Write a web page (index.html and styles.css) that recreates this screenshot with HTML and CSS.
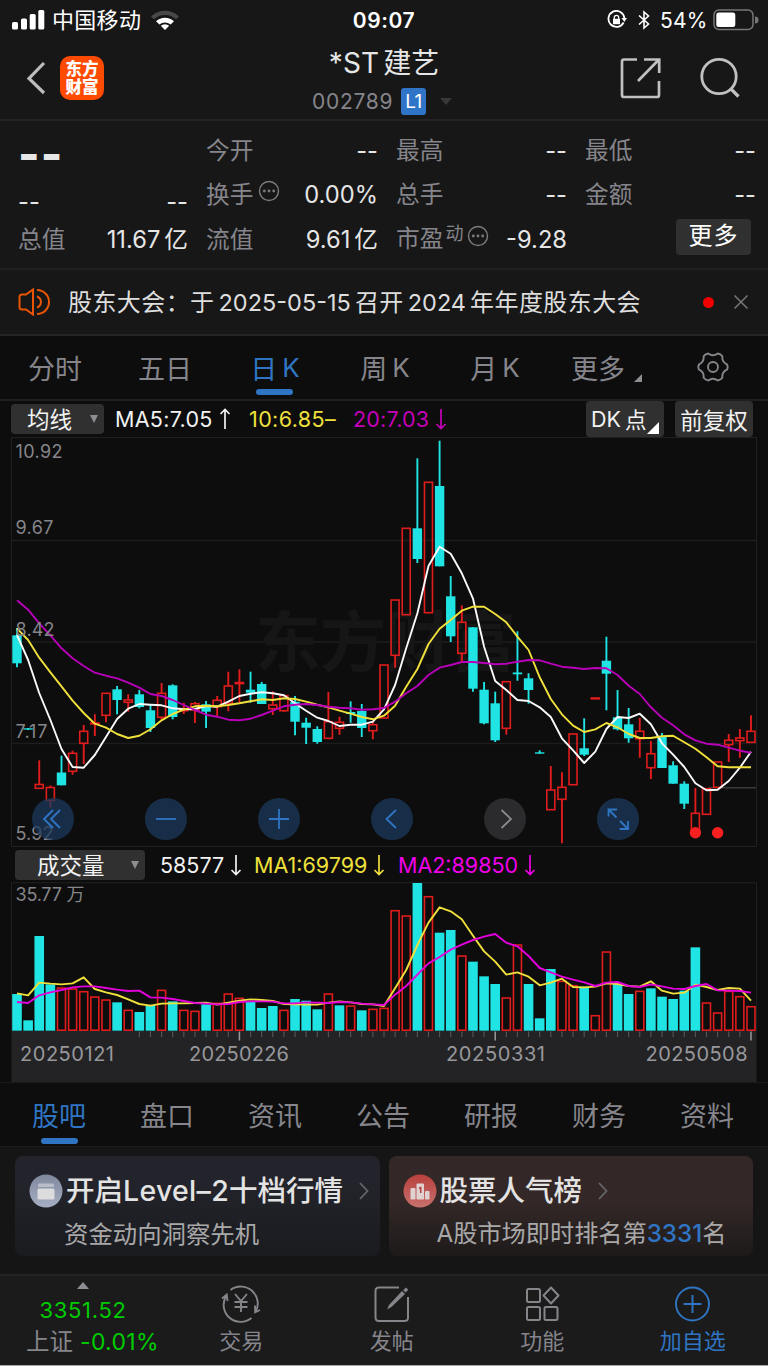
FILE: index.html
```html
<!DOCTYPE html>
<html lang="zh-CN">
<head>
<meta charset="utf-8">
<title>*ST建艺 002789</title>
<link rel="stylesheet" href="styles.css">
</head>
<body>
<div class="status">
  <div class="carrier">
    <svg width="34" height="22" viewBox="0 0 34 22" fill="#fff"><rect x="0" y="13" width="6" height="7.500" rx="1.500"/><rect x="9" y="9.500" width="6" height="11" rx="1.500"/><rect x="17.700" y="5" width="6" height="15.500" rx="1.500"/><rect x="26.300" y="1" width="6" height="19.500" rx="1.500"/></svg>
    <span class="carrier-name">中国移动</span>
    <svg width="30" height="22" viewBox="0 0 30 22"><path d="M0 7.500A20 20 0 0 1 28 7.500L25 10.300A16 16 0 0 0 3 10.300Z" fill="#484848"/><path d="M5 12.300A13 13 0 0 1 23 12.300L19.600 15.600A8.400 8.400 0 0 0 8.400 15.600Z" fill="#fff"/><path d="M14 21L9.800 16.800A6.200 6.200 0 0 1 18.200 16.800Z" fill="#fff"/></svg>
  </div>
  <div class="clock">09:07</div>
  <div class="power">
    <svg width="20" height="20" viewBox="0 0 20 20" fill="none" stroke="#fff" stroke-width="1.800"><path d="M16.600 12.500A8 8 0 1 1 17.400 8"/><path d="M14.500 8H20L17.300 12Z" fill="#fff" stroke="none"/><rect x="6" y="8.800" width="7" height="5.400" fill="#fff" stroke="none"/><path d="M7.300 9V7.500a2.200 2.200 0 0 1 4.400 0V9" stroke-width="1.300"/></svg>
    <svg class="bt" width="12" height="20" viewBox="0 0 12 20" fill="none" stroke="#fff" stroke-width="1.600"><path d="M1 5.500L10.500 14L6 18V2L10.500 6L1 14.500"/></svg>
    <span class="pct">54%</span>
    <svg class="battery" width="46" height="22" viewBox="0 0 46 22"><rect x="1" y="1" width="39" height="19.500" rx="5" fill="none" stroke="#777" stroke-width="1.500"/><rect x="3.300" y="3.500" width="19" height="14.500" rx="2.500" fill="#fff"/><path d="M42 7.500a3.500 3.500 0 0 1 0 7Z" fill="#777"/></svg>
  </div>
</div>
<header class="head">
  <div class="head-left">
    <svg width="20" height="34" viewBox="0 0 20 34" fill="none" stroke="#bdbdbd" stroke-width="3.200"><path d="M18 2L3 17.500L18 32"/></svg>
    <div class="logo">东方<br>财富</div>
  </div>
  <div class="head-mid">
    <div class="stock"><span class="stock-st">*ST</span><span>建艺</span></div>
    <div class="code"><span class="digits">002789</span><span class="level">L1</span><i class="caret"></i></div>
  </div>
  <div class="head-right">
    <svg width="42" height="42" viewBox="0 0 42 42" fill="none" stroke="#c0c0c0" stroke-width="2.700"><path d="M17 2.500H4Q2 2.500 2 4.500V38Q2 40 4 40H37Q39 40 39 38V24M24 2.500H39.200V16M39 2.500L18 24"/></svg>
    <svg width="42" height="42" viewBox="0 0 42 42" fill="none" stroke="#c0c0c0" stroke-width="2.800"><circle cx="20" cy="19.500" r="17.200"/><path d="M32 32L39.500 39.500" stroke-width="3.200"/></svg>
  </div>
</header>

<section class="quote">
  <div class="big">--</div>
  <div class="cell"><label>今开</label><b>--</b></div>
  <div class="cell"><label>最高</label><b>--</b></div>
  <div class="cell"><label>最低</label><b>--</b></div>
  <div class="cell low"><b>--</b><b>--</b></div>
  <div class="cell"><label>换手</label><svg class="dots" width="22" height="22" viewBox="0 0 22 22"><circle cx="11" cy="11" r="9.500" fill="none" stroke="#7c7c80" stroke-width="1.400"/><g fill="#7c7c80"><circle cx="6.300" cy="11" r="1.400"/><circle cx="11" cy="11" r="1.400"/><circle cx="15.700" cy="11" r="1.400"/></g></svg><b>0.00%</b></div>
  <div class="cell"><label>总手</label><b>--</b></div>
  <div class="cell"><label>金额</label><b>--</b></div>
  <div class="cell"><label>总值</label><b>11.67<span class="unit">亿</span></b></div>
  <div class="cell"><label>流值</label><b>9.61<span class="unit">亿</span></b></div>
  <div class="cell"><label>市盈<span class="dyn">动</span></label><svg class="dots pe" width="22" height="22" viewBox="0 0 22 22"><circle cx="11" cy="11" r="9.500" fill="none" stroke="#7c7c80" stroke-width="1.400"/><g fill="#7c7c80"><circle cx="6.300" cy="11" r="1.400"/><circle cx="11" cy="11" r="1.400"/><circle cx="15.700" cy="11" r="1.400"/></g></svg><b>-9.28</b></div>
  <div class="cell"><span class="more">更多</span></div>
</section>

<section class="notice">
  <svg width="34" height="28" viewBox="0 0 34 28" fill="none" stroke="#ea5504" stroke-width="2"><path d="M15 1.500V26.500L8 21.500H4Q1.500 21.500 1.500 19V9Q1.500 6.500 4 6.500H8Z"/><path d="M19 2A12 12 0 0 1 19 26M19 8.500A5.800 5.800 0 0 1 19 19.500"/></svg>
  <p><span>股东大会：于</span><span class="date">2025-05-15</span><span>召开</span><span class="year">2024</span><span>年年度股东大会</span></p>
  <i class="dot"></i>
  <svg width="16" height="16" viewBox="0 0 16 16" stroke="#77777a" stroke-width="1.500"><path d="M1.500 1.500L14.500 14.500M14.500 1.500L1.500 14.500"/></svg>
</section>

<nav class="periods">
  <span>分时</span><span>五日</span><span class="on">日<em>K</em></span><span>周<em>K</em></span><span>月<em>K</em></span><span>更多<svg width="8" height="8" viewBox="0 0 8 8" fill="#8d8d92"><path d="M8 0V8H0Z"/></svg></span>
  <span><svg class="gear" width="32" height="30" viewBox="-16 -15 32 30" fill="none" stroke="#85858a" stroke-width="1.900" stroke-linejoin="round"><path d="M14-2.700Q15.300 0 14 2.700Q8.700 5 9.400 10.800Q7.600 13.200 4.700 13.500Q0 10-4.700 13.500Q-7.600 13.200-9.400 10.800Q-8.700 5-14 2.700Q-15.300 0-14-2.700Q-8.700-5-9.400-10.800Q-7.600-13.200-4.700-13.500Q0-10 4.700-13.500Q7.600-13.200 9.400-10.800Q8.700-5 14-2.700Z"/><circle r="5"/></svg></span>
</nav>

<div class="legend price-legend">
  <span class="select ma">均线<i></i></span>
  <span class="ma5">MA5:7.05<svg class="arr" viewBox="0 0 12 22"><path d="M6 21V1.500M1.500 6L6 1.500L10.500 6"/></svg></span>
  <span class="ma10">10:6.85–</span>
  <span class="ma20">20:7.03<svg class="arr" viewBox="0 0 12 22"><path d="M6 1V20.500M1.500 16L6 20.500L10.500 16"/></svg></span>
  <span class="btn dk">DK<u>点</u><svg width="12" height="12" viewBox="0 0 12 12" fill="#fff"><path d="M12 0V12H0Z"/></svg></span>
  <span class="btn adj">前复权</span>
</div>

<div class="chart">
  <svg id="price" width="768" height="410" viewBox="0 437 768 410"></svg>
  <div class="tools">
    <button class="tool"><svg viewBox="0 0 42 42"><path d="M21 12L12 21L21 30M28 12L19 21L28 30"/></svg></button>
    <button class="tool"><svg viewBox="0 0 42 42"><path d="M11 21H31"/></svg></button>
    <button class="tool"><svg viewBox="0 0 42 42"><path d="M11 21H31M21 11V31"/></svg></button>
    <button class="tool"><svg viewBox="0 0 42 42"><path d="M25 12L15.500 21L25 30"/></svg></button>
    <button class="tool off"><svg viewBox="0 0 42 42"><path d="M17.500 12L27 21L17.500 30"/></svg></button>
    <button class="tool"><svg viewBox="0 0 42 42"><path d="M19.500 19.500L11.500 11.500M11.500 18.500V11.500H20M23 23L31 31M31 23V31H22.500"/></svg></button>
  </div>
</div>

<div class="legend vol-legend">
  <span class="select vol">成交量<i></i></span>
  <span class="v0">58577<svg class="arr" viewBox="0 0 12 22"><path d="M6 1V20.500M1.500 16L6 20.500L10.500 16"/></svg></span>
  <span class="v1">MA1:69799<svg class="arr" viewBox="0 0 12 22"><path d="M6 1V20.500M1.500 16L6 20.500L10.500 16"/></svg></span>
  <span class="v2">MA2:89850<svg class="arr" viewBox="0 0 12 22"><path d="M6 1V20.500M1.500 16L6 20.500L10.500 16"/></svg></span>
</div>
<svg id="volume" width="768" height="201" viewBox="0 882 768 201"></svg>

<nav class="topics">
  <span class="on">股吧</span><span>盘口</span><span>资讯</span><span>公告</span><span>研报</span><span>财务</span><span>资料</span>
</nav>

<section class="promos">
  <div class="promo blue">
    <div class="promo-top">
      <svg width="34" height="34" viewBox="0 0 34 34"><defs><linearGradient id="gb" x1="0" y1="0" x2="0" y2="1"><stop offset="0" stop-color="#7f879c"/><stop offset="1" stop-color="#a6afc3"/></linearGradient></defs><circle cx="17" cy="17" r="16.500" fill="url(#gb)"/><path d="M9 10.500Q9 9.500 10 9.500H24Q25 9.500 25 10.500V13H9Z" fill="#b9bdc8"/><rect x="8.500" y="14.500" width="17" height="11" rx="1.500" fill="#dcdcdc"/></svg>
      <strong>开启<span class="lv">Level–2</span>十档行情</strong>
      <svg class="chev" width="10" height="18" viewBox="0 0 10 18"><path d="M1 1L8.500 9L1 17"/></svg>
    </div>
    <p>资金动向洞察先机</p>
  </div>
  <div class="promo red">
    <div class="promo-top">
      <svg width="34" height="34" viewBox="0 0 34 34"><defs><linearGradient id="gr" x1="0" y1="0" x2="0" y2="1"><stop offset="0" stop-color="#b9403d"/><stop offset="1" stop-color="#c6716d"/></linearGradient></defs><circle cx="17" cy="17" r="16.500" fill="url(#gr)"/><g fill="#e0d2d1"><rect x="7.500" y="14" width="5" height="11.500" rx="1"/><rect x="13.500" y="9.500" width="7.500" height="16" rx="1"/><rect x="22" y="17" width="4.500" height="8.500" rx="1"/></g><path d="M16 14.500L17.700 13.500V19" fill="none" stroke="#b9403d" stroke-width="1.500"/></svg>
      <strong>股票人气榜</strong>
      <svg class="chev" width="10" height="18" viewBox="0 0 10 18"><path d="M1 1L8.500 9L1 17"/></svg>
    </div>
    <p>A股市场即时排名第<b>3331</b>名</p>
  </div>
</section>

<footer class="bar">
  <div class="index">
    <i></i>
    <div class="points">3351.52</div>
    <div class="chg"><span>上证</span><b>-0.01%</b></div>
  </div>
  <div class="act">
    <svg width="42" height="38" viewBox="0 0 42 38" fill="none" stroke="#85858a" stroke-width="1.900"><path d="M10.500 5A17 17 0 0 1 35.500 27M31.500 33A17 17 0 0 1 6.500 10.500M2 13.500L6.700 9.500L7.500 16M35 20.500L35.200 27.300L40 25"/><path d="M15 9L21 16L27 9M21 16V27M14.500 17H27.500M14.500 22H27.500"/></svg>
    <span>交易</span>
  </div>
  <div class="act">
    <svg width="42" height="38" viewBox="0 0 42 38" fill="none" stroke="#85858a" stroke-width="2"><path d="M28 2.500H8Q4.500 2.500 4.500 6V32.500Q4.500 36 8 36H33.500Q37 36 37 32.500V12"/><path d="M16 24.500L18 20L31 6L34 9L20.500 22Z" fill="#85858a" stroke="none"/><path d="M33.500 6.500L36 3.500" stroke-width="3.500"/></svg>
    <span>发帖</span>
  </div>
  <div class="act">
    <svg width="42" height="38" viewBox="0 0 42 38" fill="none" stroke="#85858a" stroke-width="2"><rect x="6" y="4" width="13" height="13" rx="1.500"/><rect x="6" y="22" width="13" height="13" rx="1.500"/><rect x="23.500" y="22" width="13" height="13" rx="1.500"/><path d="M30 2.500L37.500 10.500L30 18.500L22.500 10.500Z" stroke-linejoin="round"/></svg>
    <span>功能</span>
  </div>
  <div class="act add">
    <svg width="42" height="38" viewBox="0 0 42 38" fill="none" stroke="#2f75c4" stroke-width="1.900"><circle cx="20.500" cy="19" r="16.500"/><path d="M11.500 19H29.500M20.500 10V28"/></svg>
    <span>加自选</span>
  </div>
</footer>
<script src="chart.js"></script>
</body>
</html>
```
FILE: styles.css
```css
* { box-sizing: border-box; }
body {
  margin: 0; width: 768px; height: 1366px; overflow: hidden;
  background: #0d0d0d; color: #e6e6e6;
  font-family: Inter, "Noto Sans CJK SC", sans-serif;
  display: flex; flex-direction: column;
}
svg { display: block; flex: none; }
i, em { font-style: normal; }
p { margin: 0; }
span, b, label, strong, p { white-space: nowrap; }

.status { height: 40px; background: #171717; display: grid; grid-template-columns: 1fr 70px 1fr; align-items: center; color: #fff; }
.carrier { display: flex; align-items: center; padding-left: 12px; }
.carrier-name { font-size: 22px; margin-left: 6px; width: 99px; line-height: 30px; letter-spacing: .3px; }
.clock { font-weight: 600; font-size: 21px; text-align: center; letter-spacing: .6px; }
.power { display: flex; align-items: center; justify-content: flex-end; padding-right: 9px; }
.bt { margin-left: 11px; }
.pct { font-size: 21px; margin-left: 10px; width: 53px; letter-spacing: .2px; }

.head { height: 81px; background: #171717; border-bottom: 2px solid #232323; display: grid; grid-template-columns: 250px 1fr 250px; }
.head-left { display: flex; padding: 21px 0 0 26px; gap: 14px; }
.logo { width: 44px; height: 44px; margin-top: -5px; border-radius: 10px; background: #ff4a02; color: #fff; font-weight: 900; font-size: 16.500px; line-height: 18px; text-align: center; padding-top: 4px; }
.head-mid { text-align: center; }
.stock { font-size: 28px; line-height: 36px; margin-top: 5px; display: flex; justify-content: center; }
.stock-st { margin-right: 4px; letter-spacing: .2px; }
.code { display: flex; align-items: center; height: 28px; margin: 6px 0 0 62px; }
.digits { font-size: 21px; width: 89px; text-align: left; color: #85858b; letter-spacing: .7px; }
.level { background: #2f74c6; color: #fff; width: 25px; height: 27px; line-height: 27px; font-size: 19px; border-radius: 3px; letter-spacing: -.5px; }
.caret { margin-left: 14px; border: 6.500px solid transparent; border-top: 7px solid #38383a; border-bottom: 0; }
.head-right { display: flex; gap: 37px; padding: 17px 0 0 102px; }

.quote { height: 149px; background: #171717; border-bottom: 2px solid #202020; padding: 8px 0 0 18px; display: grid; grid-template-columns: 170px 172px 171px 171px; column-gap: 18px; grid-auto-rows: 44.300px; }
.cell { display: flex; align-items: center; font-size: 23.700px; line-height: 44px; }
.cell label { color: #85858b; }
.cell b { font-weight: 400; margin-left: auto; }
.low { padding-top: 14px; }
.low b:first-child { margin-left: 0; }
.big { font-size: 46px; font-weight: 800; line-height: 50px; letter-spacing: 1px; }
.unit { margin-left: 4px; }
.dots { margin: -8px 0 0 5px; }
.dyn { font-size: 18px; position: relative; top: -7px; margin-left: 2px; }
.dots.pe { margin-left: 4px; }
.more { margin-left: 91px; width: 75px; height: 36px; line-height: 34px; text-align: center; background: #303030; border-radius: 4px; font-size: 24px; color: #fff; letter-spacing: 1px; margin-top: -5px; }

.notice { height: 66px; background: #171717; border-bottom: 2px solid #262626; display: flex; align-items: center; padding-left: 18px; }
.notice p { width: 635px; margin: -3px 0 0 16px; font-size: 24px; letter-spacing: .42px; color: #dedede; }
.notice .date, .notice .year { margin: 0 4px; font-size: 23.500px; letter-spacing: 0; }
.dot { width: 11px; height: 11px; border-radius: 50%; background: #f00000; margin-right: 19px; }

.periods { height: 65px; border-bottom: 2px solid #1f1f1f; display: grid; grid-template-columns: repeat(6, 110px) 106px; }
.periods span { display: flex; justify-content: center; align-items: center; font-size: 27px; color: #85858b; position: relative; padding-bottom: 1px; }
.periods em { margin-left: 5px; font-size: 26px; }
.periods .on { color: #2f75c4; }
.periods .on::after { content: ""; position: absolute; width: 37px; height: 6px; border-radius: 3px; background: #2f75c4; bottom: 4px; left: 36px; }
.periods span:nth-child(6) { padding-left: 3px; }
.periods span:nth-child(6) svg { margin: 22px 0 0 9px; }

.legend { display: flex; align-items: center; font-size: 21.500px; color: #f2f2f2; }
.legend > span { display: flex; align-items: center; }
.price-legend { height: 36px; padding-left: 11px; }
.vol-legend { height: 35px; padding-left: 15px; }
.legend .select { background: #303030; border-radius: 4px; height: 30px; padding-bottom: 2px; }
.select i { border: 4px solid transparent; border-top: 8px solid #8d8d92; border-bottom: 0; margin: 2px 6px 0 auto; }
.ma { width: 93px; padding-left: 16px; font-size: 22.500px; }
.vol { width: 130px; padding-left: 22px; font-size: 22.500px; }
.arr { width: 12px; height: 22px; fill: none; stroke: currentColor; stroke-width: 1.700; margin-left: 6px; }
.ma5 { width: 134px; margin-left: 11px; letter-spacing: .3px; }
.ma10 { width: 104px; color: #f0e03c; letter-spacing: .4px; }
.ma20 { width: 233px; color: #c400b8; letter-spacing: .2px; }
.legend .btn { background: #303030; border-radius: 4px; height: 36px; position: relative; padding-bottom: 1px; }
.dk { width: 78px; padding-left: 5px; }
.dk u { text-decoration: none; margin-left: 4px; }
.dk svg { position: absolute; right: 5px; bottom: 3px; }
.adj { width: 78px; margin-left: 11px; justify-content: center; font-size: 22.500px; }
.v0 { width: 94px; margin-left: 15px; }
.v1 { width: 144px; color: #f0e03c; }
.v2 { color: #f000e8; }

.chart { height: 410px; position: relative; }
.tools { position: absolute; left: 32px; top: 361px; display: flex; gap: 70.800px; }
.tool { border: 0; padding: 0; width: 42.200px; height: 42px; border-radius: 50%; background: rgba(28, 58, 92, .75); }
.tool svg { width: 42px; height: 42px; fill: none; stroke: #2f75c4; stroke-width: 1.800; }
.off { background: #2b2b2d; }
.off svg { stroke: #8a8a8c; }
svg text { font-family: Inter, "Noto Sans CJK SC", sans-serif; }
.axis-label { font-size: 18px; fill: #85858a; }
.date-label { font-size: 20px; fill: #98989c; }
.watermark { font-size: 66px; font-weight: 700; fill: #161616; }

.topics { height: 64px; padding-left: 5px; display: grid; grid-template-columns: repeat(7, 108px); border-bottom: 1px solid #1b1b1b; }
.topics span { font-size: 27px; color: #85858b; text-align: center; line-height: 68px; position: relative; }
.topics .on { color: #2f75c4; }
.topics .on::after { content: ""; position: absolute; width: 37px; height: 6px; border-radius: 3px; background: #2f75c4; left: 36px; top: 55px; }

.promos { height: 127px; background: #151515; padding: 9px 15px 18px; display: grid; grid-template-columns: 1fr 1fr; gap: 9px; }
.promo { border-radius: 8px; padding: 17px 0 0 14px; }
.blue { background: linear-gradient(#23242b 30%, #1a1b1f); }
.red { background: linear-gradient(#332827 45%, #1e1a1a); }
.promo-top { display: flex; align-items: center; height: 36px; }
.promo strong { font-weight: 500; font-size: 28.500px; margin-left: 3px; color: #e3e3e3; line-height: 36px; }
.promo .lv { letter-spacing: .3px; }
.chev { fill: none; stroke: #65656a; stroke-width: 1.800; margin-left: 16px; }
.promo p { font-size: 24.400px; line-height: 34px; color: #a8a8a8; margin: 8px 0 0 35px; }
.promo.red p { margin-left: 34px; font-size: 24.200px; }
.promo p b { color: #2f75c4; font-weight: 500; }

.bar { height: 92px; background: #1b1b1c; border-top: 2px solid #232323; border-bottom: 1px solid #a8a8a8; display: grid; grid-template-columns: 166px repeat(4, 150.500px); }
.index { text-align: center; }
.index i { display: block; width: 0; margin: 6px auto 0; border: 6px solid transparent; border-bottom: 7px solid #8d8d92; border-top: 0; }
.points { color: #0c0; font-size: 22px; line-height: 26px; margin-top: 8px; letter-spacing: .7px; }
.chg { display: flex; padding-left: 26px; font-size: 23.500px; line-height: 30px; margin-top: 4px; color: #85858b; }
.chg b { font-weight: 400; color: #0c0; margin-left: 7px; font-size: 23px; letter-spacing: .3px; }
.act { display: flex; flex-direction: column; align-items: center; padding-top: 9px; font-size: 22px; color: #85858b; }
.act span { line-height: 32px; margin-top: 2px; }
.act.add { color: #2f75c4; }
```
FILE: chart.js
```js
const NS = 'http://www.w3.org/2000/svg';
const CYAN = '#20e3e3', RED = '#e01c1c', YELLOW = '#f0e03c';
const cx = i => 17 + i * 11.121;

function add(parent, tag, attrs, text) {
  const el = document.createElementNS(NS, tag);
  for (const k in attrs) el.setAttribute(k, attrs[k]);
  if (text) el.textContent = text;
  parent.appendChild(el);
}

// [direction, high, body top, body bottom, low]
const candles = [
  ['d',628,635.3,663.3,667.3],['d',728,728.3,729.6,730],['u',760.3,784.5,788.3,788.3],['u',785.5,787.5,800.5,807.5],
  ['d',755.7,772.5,785.3,785.3],['u',750.7,753.3,771.3,774.7],['u',725,731.3,743.3,764],['u',714.3,723,724,736],
  ['u',693.3,693.3,715.3,722.3],['d',686,689.3,700,714.3],['u',694.3,700,702.3,711.7],['d',690,694.3,707,708.3],
  ['d',704.3,710.3,728,732],['u',683,693.3,717.3,720],['d',684.3,685.3,717,719.3],['u',702.7,708.7,710.7,714],
  ['u',702,703.7,710,723],['d',701,704.3,711.7,728],['u',696,700.3,706.7,717.3],['u',671.7,686,703.3,711.3],
  ['u',669.3,682.6,683.6,703.3],['d',671.7,689.7,692.7,702.7],['d',682,684,704,704],['u',691.3,705,708.7,715],
  ['u',695,695.7,710.7,711.7],['d',696,701.7,721.7,735.3],['d',717.7,722.7,727.7,744],['d',726.3,729,742,743.7],
  ['u',692,721.7,738.3,739.3],['u',716.7,722.3,728.3,734.7],['d',701.3,712,714,722.7],['d',704,711,728,737],
  ['u',721.7,724.7,730.7,739.3],['u',665,665,718,718],['u',600,600,655.3,667.7],['u',528.3,528.3,614.7,614.7],
  ['d',458.3,528.3,559,563],['u',482.3,482.3,612.7,612.7],['d',440.7,486,566.3,566.3],['d',576,596.3,636.3,642],
  ['u',605.3,622.3,653.3,661.7],['d',627.3,627.3,688.7,691.7],['d',682,689.7,723.3,724.3],['d',691.7,703.3,740.3,742],
  ['u',681.7,681.7,728.3,734.7],['d',631.3,672.5,674.3,680.7],['d',673.3,678.3,690,703.7],['d',750.3,752.3,753.7,753.7],
  ['u',766,790,809.7,809.7],['u',772.3,787.3,799.3,843.3],['u',734,734,784.7,784.7],['d',718.3,748.3,754.7,756],
  ['u',698,698,698.8,698.8],['d',636.7,660.7,673.7,710.3],['d',690,717.3,729.3,730.3],['d',708,724.3,738.3,742.7],
  ['u',718,731.3,738.7,757.7],['u',741,753.7,767.7,779],['d',733,736.7,768,768],['d',761.3,765.3,783.7,783.7],
  ['d',781.3,783.7,803.7,809],['u',788,813.3,832,832],['u',788.7,788.7,814.3,814.3],['u',762,762,787.3,787.3],
  ['u',734,740.3,744.7,762],['u',729,738,740.7,757.7],['u',715.3,731.3,742.3,742.3]
];
const ma5 = [635,660,693,720,749,767,767.7,755,737,719,708.7,704,704.7,705.3,708.3,709.3,709,706,706.7,701.7,696,693.7,692.3,693.3,695.3,703.3,710.7,717.7,721,726,724.7,724.7,721.7,709.3,685,648.3,613.3,566,546.7,553.7,573.3,598.7,646.7,681,690,700,701,707.3,717,738.3,750.3,763,751.7,729,717,718,713.7,724.3,743.3,754.7,767,783.3,790.3,789.7,781,767.7,751.7];
const ma10 = [628.3,640,657.7,672.3,686.3,700.7,713,723.7,727.7,734,738,735.7,729.3,720.3,714,709.7,706.3,705.7,706.3,705,703.3,701.3,699.3,700,698.3,699,701.7,704.7,707.3,710.7,713.7,717,719.3,715.7,705.7,686.7,669,644,628.7,620,610.7,606.7,606.7,614,622.3,636.7,650,677.3,699,714.3,725.7,732,729.3,723,727.3,734,738,738,736.3,735.7,742.3,748.7,757.3,766.3,767.3,767.3,767.3];
const ma20 = [600.3,609.7,623.3,635.3,648.3,658.3,666,672.7,675.7,678.3,682.7,687.7,694,696,700,705,710,714.7,716.7,719.7,720.3,718.7,715,710.7,706.3,704.7,704,705,706.7,707.7,708.3,709.7,709.3,708,701.7,693.3,686,675,667.7,665,662,662,663,664.3,663.7,661.7,660,660.3,663.7,666.7,667.7,669,668,668.3,675,685.7,694,707.3,717.7,725.3,734.3,740.3,743.7,744.7,747.7,750.7,752.7];

// volume tops in thirds of a pixel below y = 850
const volumes = [432,511,258,403,412,415,423,439,448,457,479,486,465,419,454,479,482,463,458,430,443,454,474,468,479,447,452,478,430,466,466,481,476,473,180,196,99,138,248,240,316,335,379,402,442,283,402,505,357,392,405,410,495,304,402,432,422,415,440,447,422,292,457,487,422,438,468];
const rising = new Set([4,5,6,7,8,10,13,15,16,18,19,20,24,28,30,32,33,34,35,37,40,44,45,49,50,52,53,56,62,63,64,65,66]);
const vma1 = [430,436,398,401,403,400,382,417,427,435,448,462,467,461,460,460,459,458,464,458,452,448,450,453,462,463,464,464,458,454,457,462,463,468,415,360,285,218,172,184,208,257,304,335,374,367,380,406,398,386,411,412,410,400,402,408,410,394,422,431,428,404,411,420,414,416,452];
const vma2 = [456,459,436,427,420,412,409,409,414,419,423,422,442,443,447,453,459,461,463,462,456,454,454,455,460,460,457,458,459,456,457,461,463,465,434,408,374,340,321,299,284,270,260,252,278,289,318,354,367,380,389,397,408,398,396,408,411,403,409,416,417,408,402,421,422,423,428];

function line(svg, values, color) {
  add(svg, 'polyline', {
    points: values.map((y, i) => cx(i).toFixed(1) + ',' + y).join(' '),
    fill: 'none', stroke: color, 'stroke-width': 1.9, 'stroke-linejoin': 'round'
  });
}

const price = document.getElementById('price');
for (const y of [540.5, 642, 743.5]) add(price, 'path', { d: `M11 ${y}H757`, stroke: '#1d1d1d', 'stroke-width': 1.3 });
add(price, 'rect', { x: 11.5, y: 437.5, width: 745, height: 409, fill: 'none', stroke: '#202020' });
add(price, 'text', { x: 255, y: 666, class: 'watermark', textLength: 261 }, '东方财富');
add(price, 'path', { d: 'M708 787.8H756', stroke: '#3a3a3a', 'stroke-width': 1.6 });
candles.forEach(([dir, hi, top, bot, lo], i) => {
  const x = cx(i);
  if (dir === 'd') {
    add(price, 'path', { d: `M${x} ${hi}V${lo}`, stroke: CYAN, 'stroke-width': 1.9 });
    add(price, 'rect', { x: x - 4.7, y: top, width: 9.4, height: bot - top, fill: CYAN });
  } else {
    add(price, 'path', { d: `M${x} ${hi}V${top}M${x} ${bot}V${lo}`, stroke: RED, 'stroke-width': 1.9 });
    add(price, 'rect', { x: x - 4, y: top, width: 8, height: bot - top, fill: 'none', stroke: RED, 'stroke-width': 1.6 });
  }
});
line(price, ma5, '#fafafa');
line(price, ma10, YELLOW);
line(price, ma20, '#b800b8');
for (const i of [61, 63]) add(price, 'circle', { cx: cx(i), cy: 832.8, r: 5.7, fill: '#f82020' });
[['10.92', 458, 47], ['9.67', 534, 38], ['8.42', 636, 39], ['7.17', 738, 32], ['5.92', 840, 38]].forEach(([t, y, w]) =>
  add(price, 'text', { x: 15.5, y, class: 'axis-label', textLength: w }, t));

const vol = document.getElementById('volume');
const base = 1030.7;
const vy = v => 850 + v / 3;
add(vol, 'path', { d: 'M11.500 1031V882.700H756.500V1031', fill: 'none', stroke: '#202020' });
add(vol, 'rect', { x: 11.5, y: base, width: 745, height: 51.5, fill: '#232325' });
add(vol, 'path', { d: 'M0 1082.700H768', stroke: '#1d1d1d' });
volumes.forEach((v, i) => {
  const x = cx(i), y = vy(v);
  if (rising.has(i)) add(vol, 'rect', { x: x - 4, y: y + .7, width: 8, height: base - y - 1.2, fill: 'none', stroke: RED, 'stroke-width': 1.6 });
  else add(vol, 'rect', { x: x - 4.8, y, width: 9.6, height: base - y, fill: CYAN });
});
line(vol, vma1.map(vy), YELLOW);
line(vol, vma2.map(vy), '#e400dc');
for (let i = 11; i < 67; i++) {
  const major = i === 20 || i === 43 || i === 66;
  add(vol, 'path', { d: `M${cx(i)} 1031.500V${major ? 1040.5 : 1037}`, stroke: major ? '#98989c' : '#58585a', 'stroke-width': major ? 1.5 : 1.1 });
}
add(vol, 'text', { x: 15.5, y: 901, class: 'axis-label', textLength: 69 }, '35.77 万');
[['20250121', 20, 94], ['20250226', 189, 100], ['20250331', 446, 99], ['20250508', 645.5, 102]].forEach(([t, x, w]) =>
  add(vol, 'text', { x, y: 1060.5, class: 'date-label', textLength: w }, t));
```
